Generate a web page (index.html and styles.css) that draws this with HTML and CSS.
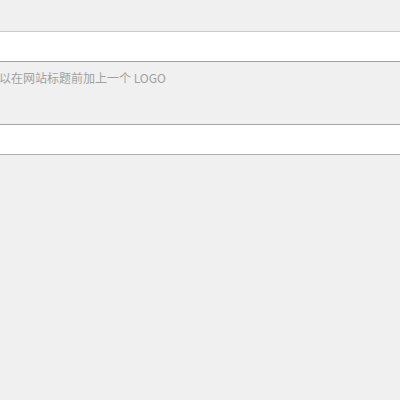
FILE: index.html
```html
<!DOCTYPE html>
<html lang="zh">
<head>
<meta charset="utf-8">
<link rel="stylesheet" href="styles.css">
</head>
<body>
<div class="form">
  <div class="field field-first"></div>
  <p class="hint">以在网站标题前加上一个 LOGO</p>
  <div class="field field-second"></div>
</div>
</body>
</html>
```
FILE: styles.css
```css
html, body {
  margin: 0;
  padding: 0;
  background: #f0f0f0;
}
.form {
  display: flex;
  flex-direction: column;
  padding-top: 31px;
}
.field {
  height: 29px;
  background: #ffffff;
}
.field-first {
  border-top: 1px solid #cbcbcb;
  border-bottom: 1px solid #a2a2a2;
}
.field-second {
  border-top: 1px solid #a6a6a6;
  border-bottom: 1px solid #b0b0b0;
}
.hint {
  margin: 0 0 0 -1px;
  height: 62px;
  padding-top: 8px;
  box-sizing: border-box;
  font-family: "Noto Sans CJK SC", "Noto Sans", sans-serif;
  font-size: 12px;
  line-height: 16px;
  color: #a0a0a0;
}
```
